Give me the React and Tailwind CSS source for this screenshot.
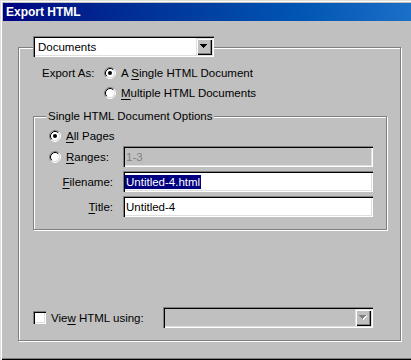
const sunken =
  "shadow-[inset_1px_1px_0_#808080,inset_2px_2px_0_#000,inset_-1px_-1px_0_#fff,inset_-2px_-2px_0_#dfdfdf]";
const raised =
  "shadow-[inset_1px_1px_0_#dfdfdf,inset_2px_2px_0_#fff,inset_-1px_-1px_0_#000,inset_-2px_-2px_0_#808080]";

function Radio({ checked }) {
  return (
    <svg width="12" height="12" viewBox="0 0 12 12" className="shrink-0">
      <circle cx="6" cy="6" r="4.5" fill="#fff" />
      <path d="M2.11 9.89A5.5 5.5 0 0 1 9.89 2.11" stroke="#808080" fill="none" />
      <path d="M9.89 2.11A5.5 5.5 0 0 1 2.11 9.89" stroke="#fff" fill="none" />
      <path d="M2.82 9.18A4.5 4.5 0 0 1 9.18 2.82" stroke="#000" fill="none" />
      <path d="M9.18 2.82A4.5 4.5 0 0 1 2.82 9.18" stroke="#dfdfdf" fill="none" />
      {checked && <circle cx="6" cy="6" r="2" fill="#000" />}
    </svg>
  );
}

function Arrow({ disabled }) {
  const d = "M0 0h7v1H0zM1 1h5v1H1zM2 2h3v1H2zM3 3h1v1H3z";
  return (
    <svg width="8" height="5" viewBox="0 0 8 5">
      {disabled && <path d={d} fill="#fff" transform="translate(1 1)" />}
      <path d={d} fill={disabled ? "#808080" : "#000"} />
    </svg>
  );
}

function ArrowButton({ disabled }) {
  return (
    <div
      className={`ml-auto mr-[2px] flex h-[17px] w-[16px] items-center justify-center bg-[#c0c0c0] ${raised}`}
    >
      <Arrow disabled={disabled} />
    </div>
  );
}

export default function App() {
  return (
    <div className="flex h-[360px] w-[411px] flex-col overflow-hidden bg-[#c0c0c0] font-['Liberation_Sans',Arial,sans-serif] text-[11.5px] leading-[14px] text-black shadow-[inset_1px_1px_0_#dfdfdf,inset_2px_2px_0_#fff,inset_0_-1px_0_#000,inset_0_-2px_0_#808080]">
      {/* Title bar */}
      <div className="ml-[3px] mt-[3px] flex h-[18px] shrink-0 items-center bg-linear-to-r from-[#000080] to-[#1a6fc6] pl-[3px] text-[12px] font-bold text-white">
        Export HTML
      </div>

      {/* Outer group */}
      <div className="ml-[18px] mt-[26px] flex h-[294px] w-[383px] shrink-0 flex-col border border-[#808080] shadow-[1px_1px_0_#fff,inset_1px_1px_0_#fff]">
        <div className={`-mt-[12px] ml-[14px] flex h-[21px] w-[181px] items-center bg-white pl-[5px] ${sunken}`}>
          <span>Documents</span>
          <ArrowButton />
        </div>

        {/* Export As */}
        <div className="ml-[23px] mt-[6px] flex">
          <div className="flex h-[20px] w-[62px] items-center">Export As:</div>
          <div className="flex flex-col">
            <div className="flex h-[20px] items-center gap-[5px]">
              <Radio checked />
              <span>
                A <u className="underline-offset-2">S</u>ingle HTML Document
              </span>
            </div>
            <div className="flex h-[20px] items-center gap-[5px]">
              <Radio />
              <span>
                <u className="underline-offset-2">M</u>ultiple HTML Documents
              </span>
            </div>
          </div>
        </div>

        {/* Inner group */}
        <div className="ml-[14px] mt-[13px] flex h-[114px] w-[354px] flex-col border border-[#808080] shadow-[1px_1px_0_#fff,inset_1px_1px_0_#fff]">
          <div className="-mt-[8px] ml-[12px] h-[14px] self-start bg-[#c0c0c0] px-[2px]">
            Single HTML Document Options
          </div>

          <div className="ml-[15px] mt-[3px] flex h-[20px] items-center gap-[5px]">
            <Radio checked />
            <span>
              <u className="underline-offset-2">A</u>ll Pages
            </span>
          </div>

          <div className="ml-[15px] flex h-[21px] items-center">
            <div className="flex w-[74px] items-center gap-[5px]">
              <Radio />
              <span>
                <u className="underline-offset-2">R</u>anges:
              </span>
            </div>
            <div className={`flex h-[21px] w-[250px] items-center bg-[#c0c0c0] pl-[3px] text-[#808080] ${sunken}`}>
              1-3
            </div>
          </div>

          <div className="ml-[15px] mt-[4px] flex h-[21px] items-center">
            <div className="w-[74px] pr-[10px] text-right">
              <u className="underline-offset-2">F</u>ilename:
            </div>
            <div className={`flex h-[21px] w-[250px] items-center bg-white pl-[2px] ${sunken}`}>
              <span className="bg-[#000080] px-[1px] text-white">Untitled-4.html</span>
            </div>
          </div>

          <div className="ml-[15px] mt-[4px] flex h-[21px] items-center">
            <div className="w-[74px] pr-[10px] text-right">
              <u className="underline-offset-2">T</u>itle:
            </div>
            <div className={`flex h-[21px] w-[250px] items-center bg-white pl-[3px] ${sunken}`}>
              Untitled-4
            </div>
          </div>
        </div>

        {/* View HTML using */}
        <div className="ml-[14px] mt-[77px] flex h-[21px] items-center">
          <div className="flex w-[130px] items-center gap-[5px]">
            <div className={`h-[13px] w-[13px] shrink-0 bg-white ${sunken}`} />
            <span>
              Vie<u className="underline-offset-2">w</u> HTML using:
            </span>
          </div>
          <div className={`flex h-[21px] w-[210px] items-center bg-[#c0c0c0] ${sunken}`}>
            <ArrowButton disabled />
          </div>
        </div>
      </div>
    </div>
  );
}
